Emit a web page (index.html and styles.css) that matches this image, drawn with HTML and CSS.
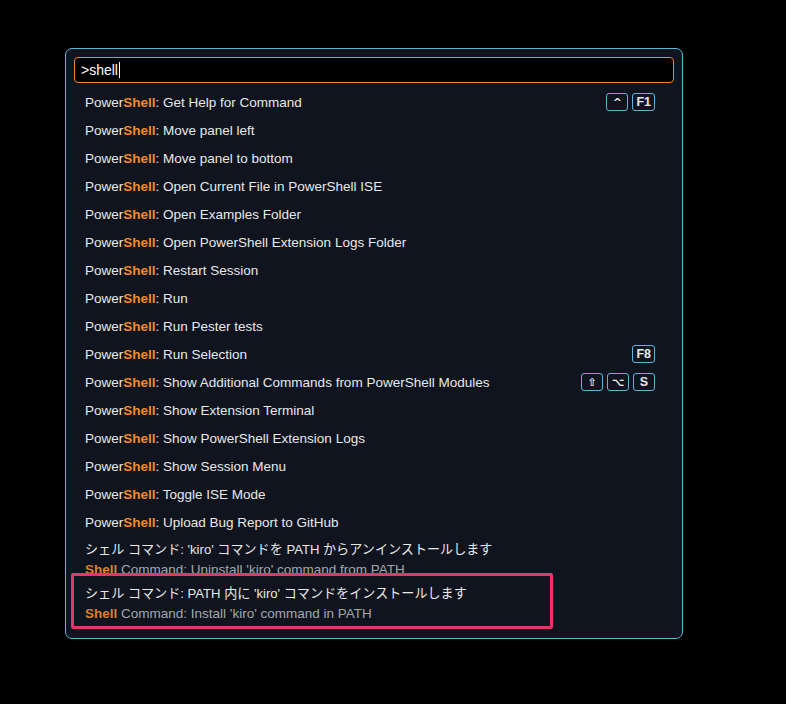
FILE: index.html
```html
<!DOCTYPE html>
<html lang="ja">
<head>
    <meta charset="UTF-8">
    <title>Command Palette</title>
    <link rel="stylesheet" href="styles.css">
</head>
<body>
    <div class="paleta">
        <div class="entrada">&gt;shell<span class="cursor"></span></div>
        <ul class="lista">
            <li class="item"><span class="rotulo">Power<b>Shell</b>: Get Help for Command</span><span class="teclas"><kbd class="icone">^</kbd><kbd>F1</kbd></span></li>
            <li class="item"><span class="rotulo">Power<b>Shell</b>: Move panel left</span></li>
            <li class="item"><span class="rotulo">Power<b>Shell</b>: Move panel to bottom</span></li>
            <li class="item"><span class="rotulo">Power<b>Shell</b>: Open Current File in PowerShell ISE</span></li>
            <li class="item"><span class="rotulo">Power<b>Shell</b>: Open Examples Folder</span></li>
            <li class="item"><span class="rotulo">Power<b>Shell</b>: Open PowerShell Extension Logs Folder</span></li>
            <li class="item"><span class="rotulo">Power<b>Shell</b>: Restart Session</span></li>
            <li class="item"><span class="rotulo">Power<b>Shell</b>: Run</span></li>
            <li class="item"><span class="rotulo">Power<b>Shell</b>: Run Pester tests</span></li>
            <li class="item"><span class="rotulo">Power<b>Shell</b>: Run Selection</span><span class="teclas"><kbd>F8</kbd></span></li>
            <li class="item"><span class="rotulo">Power<b>Shell</b>: Show Additional Commands from PowerShell Modules</span><span class="teclas"><kbd class="icone">&#x21E7;</kbd><kbd class="icone">&#x2325;</kbd><kbd>S</kbd></span></li>
            <li class="item"><span class="rotulo">Power<b>Shell</b>: Show Extension Terminal</span></li>
            <li class="item"><span class="rotulo">Power<b>Shell</b>: Show PowerShell Extension Logs</span></li>
            <li class="item"><span class="rotulo">Power<b>Shell</b>: Show Session Menu</span></li>
            <li class="item"><span class="rotulo">Power<b>Shell</b>: Toggle ISE Mode</span></li>
            <li class="item"><span class="rotulo">Power<b>Shell</b>: Upload Bug Report to GitHub</span></li>
            <li class="item duplo">
                <span class="rotulo">シェル コマンド: 'kiro' コマンドを PATH からアンインストールします</span>
                <span class="detalhe"><b>Shell</b> Command: Uninstall 'kiro' command from PATH</span>
            </li>
            <li class="item duplo marcado">
                <span class="rotulo">シェル コマンド: PATH 内に 'kiro' コマンドをインストールします</span>
                <span class="detalhe"><b>Shell</b> Command: Install 'kiro' command in PATH</span>
            </li>
        </ul>
    </div>
</body>
</html>
```

FILE: styles.css
```css
body {
    margin: 0;
    background: #000;
    font-family: 'Liberation Sans', Arial, 'Noto Sans CJK JP', sans-serif;
    font-size: 13.5px;
    color: #e8e8e8;
    padding: 48px 0 0 65px;
    height: 704px;
    box-sizing: border-box;
}
.paleta {
    width: 618px;
    height: 591px;
    box-sizing: border-box;
    background-color: #0f141e;
    border: 1px solid #5fb4d8;
    border-radius: 7px;
    padding: 8px 8px 0 8px;
}
.entrada {
    height: 26px;
    box-sizing: border-box;
    border: 1px solid #f0872b;
    border-radius: 4px;
    background-color: #000;
    color: #fff;
    padding: 0 6px;
    display: flex;
    align-items: center;
    font-size: 14px;
}
.cursor {
    display: inline-block;
    width: 1px;
    height: 16px;
    background: #fff;
    margin-left: 1px;
}
.lista {
    list-style: none;
    margin: 5px -3px 0 -3px;
    padding: 0;
}
.item {
    height: 28px;
    display: flex;
    align-items: center;
    justify-content: space-between;
    padding: 0 22px 0 14px;
}
.item b {
    color: #f28a2a;
    font-weight: bold;
}
.teclas {
    display: flex;
    gap: 4px;
}
kbd {
    font-family: 'Liberation Sans', Arial, sans-serif;
    font-size: 12.5px;
    font-weight: bold;
    color: #e8e8e8;
    min-width: 22px;
    height: 18px;
    box-sizing: border-box;
    border: 1px solid #5fb4d8;
    border-radius: 3px;
    display: flex;
    align-items: center;
    justify-content: center;
    padding: 0 3px;
}
kbd.icone {
    font-family: 'DejaVu Sans', sans-serif;
    font-weight: bold;
    font-size: 11px;
}
.item.duplo {
    height: 44px;
    flex-direction: column;
    align-items: flex-start;
    justify-content: flex-start;
    padding-top: 6px;
    box-sizing: border-box;
}
.item.duplo .rotulo {
    font-size: 13.1px;
    line-height: 16px;
}
.detalhe {
    color: #a3a7ad;
    line-height: 16px;
    margin-top: 4px;
}
.detalhe b {
    color: #d9822e;
}
.marcado {
    position: relative;
}
.marcado::after {
    content: '';
    position: absolute;
    left: 0;
    top: -7px;
    width: 482px;
    height: 56px;
    box-sizing: border-box;
    border: 3px solid #e8336b;
    border-radius: 2px;
}
```
